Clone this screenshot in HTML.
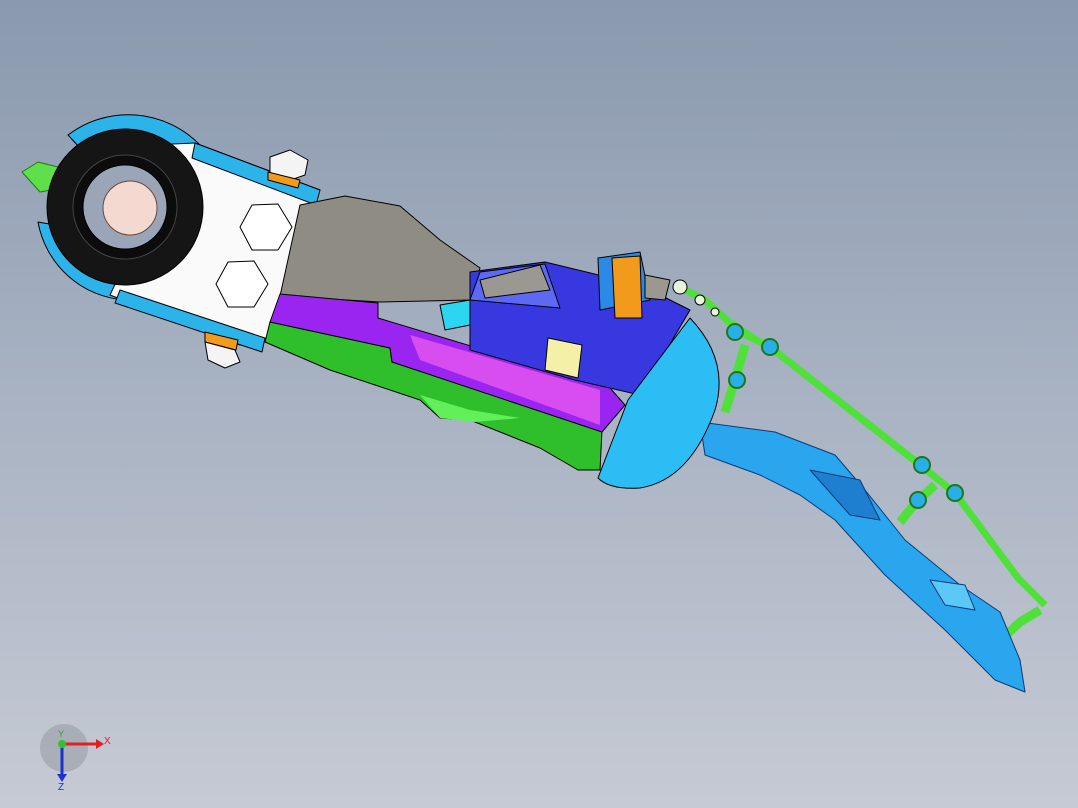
<!DOCTYPE html>
<html><head><meta charset="utf-8"><style>
html,body{margin:0;padding:0;width:1078px;height:808px;overflow:hidden}
body{background:linear-gradient(180deg,#8a99ae 0%,#a9b3c3 50%,#c6cad4 100%)}
svg{position:absolute;left:0;top:0}
</style></head><body>
<svg width="1078" height="808" viewBox="0 0 1078 808">
<g stroke="#000" stroke-width="1" stroke-linejoin="round">
<!-- green linkage -->
<g stroke="#1c7a12" stroke-width="1">
<polyline points="680,287 705,300 740,332 770,347 920,465 955,493 1018,578 1045,605" fill="none" stroke="#4fe03a" stroke-width="7"/>
<polyline points="745,345 735,380 725,412" fill="none" stroke="#4fe03a" stroke-width="9"/>
<polyline points="935,485 918,500 900,522" fill="none" stroke="#4fe03a" stroke-width="9"/>
<polyline points="1040,610 1020,622 1005,636" fill="none" stroke="#4fe03a" stroke-width="9"/>
<polyline points="700,300 790,360 920,462" fill="none" stroke="#4fe03a" stroke-width="3"/>
</g>
<circle cx="735" cy="332" r="8" fill="#29aee8" stroke="#1c7a12" stroke-width="2"/>
<circle cx="770" cy="347" r="8" fill="#29aee8" stroke="#1c7a12" stroke-width="2"/>
<circle cx="737" cy="380" r="8" fill="#29aee8" stroke="#1c7a12" stroke-width="2"/>
<circle cx="922" cy="465" r="8" fill="#29aee8" stroke="#1c7a12" stroke-width="2"/>
<circle cx="955" cy="493" r="8" fill="#29aee8" stroke="#1c7a12" stroke-width="2"/>
<circle cx="918" cy="500" r="8" fill="#29aee8" stroke="#1c7a12" stroke-width="2"/>
<circle cx="680" cy="287" r="7" fill="#e6f4dc"/><circle cx="700" cy="300" r="5" fill="#e6f4dc"/><circle cx="715" cy="312" r="4" fill="#e6f4dc"/>
<!-- fingers -->
<path d="M700,422 L775,432 L835,455 L865,490 L905,540 L960,585 L1000,612 L1020,660 L1025,692 L995,680 L945,630 L885,575 L835,520 L800,495 L760,475 L705,455 Z" fill="#2aa6ee" stroke="#0c3a7a"/>
<path d="M810,470 L860,480 L880,520 L850,515 Z" fill="#1e7fd0" stroke="#0c3a7a"/>
<path d="M930,580 L965,585 L975,610 L945,605 Z" fill="#5cc8f5" stroke="#0c3a7a"/>
<!-- blue arcs -->
<path d="M68,135 A100,100 0 0 1 200,145 L182,160 A78,78 0 0 0 80,148 Z" fill="#2cb3ea"/>
<path d="M38,222 A95,95 0 0 0 125,300 L128,282 A78,78 0 0 1 55,225 Z" fill="#2cb3ea"/>
<!-- nozzle left -->
<path d="M22,172 L38,162 L62,168 L62,188 L40,192 Z" fill="#5fe04a" stroke="#1c7a12"/>
<!-- white bracket -->
<path d="M150,145 L195,143 L320,190 L270,340 L240,345 L110,295 L150,210 Z" fill="#fafafa"/>
<path d="M195,143 L320,190 L316,205 L192,158 Z" fill="#2cb3ea"/>
<path d="M120,290 L265,338 L262,352 L115,303 Z" fill="#2cb3ea"/>
<polygon points="252,205 278,204 292,227 278,250 252,250 240,227" fill="#fff"/>
<polygon points="228,262 254,261 268,284 254,307 228,307 216,284" fill="#fff"/>
<!-- bolts -->
<path d="M270,157 L290,150 L308,160 L305,175 L285,182 L270,172 Z" fill="#f4f4f4"/>
<path d="M268,172 L300,180 L298,188 L268,180 Z" fill="#f29a1c"/>
<path d="M205,332 L238,340 L236,350 L205,342 Z" fill="#f29a1c"/>
<path d="M205,342 L235,350 L240,362 L225,368 L208,360 Z" fill="#f4f4f4"/>
<!-- black ring -->
<circle cx="125" cy="207" r="78" fill="#151515"/>
<circle cx="125" cy="207" r="52" fill="#0c0c0c" stroke="#444"/>
<circle cx="125" cy="207" r="42" fill="#9aa6b8" stroke="#000"/>
<circle cx="130" cy="208" r="27" fill="#f3d9cf" stroke="#6a4a40"/>
<!-- gray body -->
<path d="M300,205 L345,196 L400,206 L440,240 L480,268 L470,300 L380,302 L280,296 Z" fill="#8f8d83"/>
<!-- green -->
<path d="M270,322 L390,348 L392,362 L602,430 L600,470 L578,470 L540,448 L470,420 L440,418 L420,400 L330,370 L265,342 Z" fill="#2fbf2b"/>
<path d="M420,395 L470,410 L520,418 L475,422 L440,418 Z" fill="#62f05a" stroke="none"/>
<!-- purple -->
<path d="M280,294 L378,303 L378,318 L610,388 L625,405 L602,432 L392,362 L390,348 L270,322 Z" fill="#9a25f0"/>
<path d="M410,335 L600,390 L600,425 L420,360 Z" fill="#d84df0" stroke="none"/>
<!-- blue box -->
<path d="M470,272 L545,262 L640,285 L690,310 L640,395 L575,380 L470,350 Z" fill="#3838e0"/>
<path d="M480,272 L545,264 L560,308 L470,300 Z" fill="#5d68f5"/>
<path d="M548,338 L582,345 L578,378 L545,370 Z" fill="#f5f0a8"/>
<path d="M480,280 L540,265 L550,290 L485,298 Z" fill="#9a9890"/>
<path d="M598,258 L640,252 L650,300 L600,310 Z" fill="#2c8ae6"/>
<path d="M612,258 L640,256 L642,318 L615,318 Z" fill="#f29a1c"/>
<path d="M645,275 L670,280 L665,300 L645,298 Z" fill="#9a9890"/>
<path d="M440,305 L470,300 L470,325 L445,330 Z" fill="#2cd6f0"/>
<!-- light blue dome -->
<path d="M690,318 Q730,360 715,410 Q690,480 640,488 Q610,490 598,478 L628,400 Z" fill="#2dbdf5"/>
</g>
<!-- axis -->
<g>
<circle cx="64" cy="748" r="24" fill="#8f95a0" opacity=".5"/>
<line x1="62" y1="744" x2="96" y2="744" stroke="#e02020" stroke-width="3"/>
<polygon points="96,739 104,744 96,749" fill="#e02020"/>
<line x1="62" y1="744" x2="62" y2="776" stroke="#2030d0" stroke-width="3"/>
<polygon points="57,774 62,782 67,774" fill="#2030d0"/>
<circle cx="62" cy="744" r="4" fill="#30c030"/>
<text x="104" y="744" font-family="Liberation Sans,sans-serif" font-size="10" fill="#e02020">X</text>
<text x="58" y="790" font-family="Liberation Sans,sans-serif" font-size="10" fill="#2030d0">Z</text>
<text x="58" y="737" font-family="Liberation Sans,sans-serif" font-size="9" fill="#30a030">Y</text>
</g>
</svg>
</body></html>
